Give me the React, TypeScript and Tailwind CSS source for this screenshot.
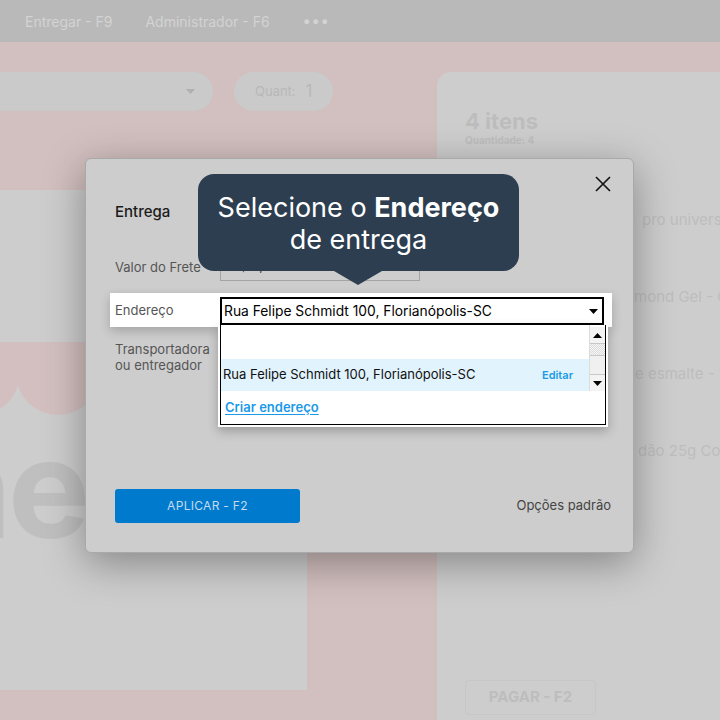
import React from 'react';

const font = { fontFamily: 'Inter, "Noto Sans", sans-serif' };

const Caret: React.FC<{ up?: boolean; className?: string }> = ({ up, className }) => (
  <svg width="9" height="5" viewBox="0 0 9 5" className={className}>
    {up ? <path d="M0 5 L4.5 0 L9 5 Z" fill="currentColor" /> : <path d="M0 0 L9 0 L4.5 5 Z" fill="currentColor" />}
  </svg>
);

// the start of each name sits behind the modal
const items = [
  { hidden: 'Esmalte Top Coat Brilho', shown: 'pro universal', cut: 'w-[177px]' },
  { hidden: 'Esmalte Gel Diamo', shown: 'mond Gel - Gold', cut: 'w-[169px]' },
  { hidden: 'Kit Removedor d', shown: 'e esmalte - 100ml', cut: 'w-[170px]' },
  { hidden: 'Lixa de unha Alg', shown: 'dão 25g Cotton', cut: 'w-[173px]' },
];

const Background: React.FC = () => (
  <div className="flex flex-col w-full h-full">
    <nav className="h-[42px] shrink-0 bg-[#b9b9b9] flex items-center pl-[25px] text-[14px] text-[#d3d3d3]">
      <span>Entregar - F9</span>
      <span className="ml-[33px]">Administrador - F6</span>
      <span className="ml-[33px] text-[15px] tracking-[0.5px]">•••</span>
    </nav>

    <div className="flex-1 flex bg-[#d2bfbf] overflow-hidden">
      <div className="w-[437px] shrink-0 flex flex-col">
        <div className="flex pt-[30px] gap-[21px]">
          <div className="w-[213px] h-[39px] rounded-r-full bg-[#cacaca] flex items-center justify-end pr-[18px] text-[#b0b0b0]">
            <Caret />
          </div>
          <div className="w-[99px] h-[39px] rounded-full bg-[#cacaca] flex items-center pl-[21px] text-[#b8b8b8]">
            <span className="text-[13px]">Quant:</span>
            <span className="ml-[10px] text-[17px]">1</span>
          </div>
        </div>
        <div className="mt-[79px] w-[307px] h-[500px] bg-[#cdcdcd] overflow-hidden flex flex-col">
          <svg width="307" height="76" viewBox="0 0 307 76" className="mt-[152px] shrink-0">
            <path d="M0 0 H307 V35 H0 Z" fill="#d3bfbf" />
            <circle cx="58" cy="31" r="42" fill="#d3bfbf" />
            <circle cx="-22" cy="31" r="42" fill="#d3bfbf" />
          </svg>
          <div className="mt-[1px] ml-[-74px] text-[138px] leading-[138px] font-bold text-[#bfbfbf] tracking-[-4px]">ne</div>
        </div>
      </div>

      <div className="flex-1 mt-[30px] bg-[#cdcdcd] rounded-tl-[14px] pl-[28px] pt-[36px] flex flex-col text-[#bdbdbd]">
        <div className="text-[22px] leading-[26px] font-bold">4 itens</div>
        <div className="text-[10px] leading-[12px] font-bold">Quantidade: 4</div>
        <div className="flex flex-col mt-[65px] gap-[59px] text-[15px] leading-[18px]">
          {items.map((it) => (
            <div key={it.shown} className="flex whitespace-nowrap">
              <span className={`${it.cut} shrink-0 overflow-hidden`}>{it.hidden}</span>
              <span>{it.shown}</span>
            </div>
          ))}
        </div>
        <div className="mt-auto mb-[5px] w-[131px] h-[35px] rounded-[4px] border border-[#c6c6c6] flex items-center justify-center text-[15px] font-bold text-[#bdbdbd]">
          PAGAR - F2
        </div>
      </div>
    </div>
  </div>
);

const AddressDropdown: React.FC = () => (
  <div className="absolute left-[-2px] top-[28px] w-[390px] h-[102px] bg-white px-[2px] pb-[2px] shadow-[0_4px_10px_rgba(0,0,0,0.25)] z-10">
    <div className="h-full border-x border-b border-black flex flex-col">
      <div className="flex h-[66px]">
        <div className="flex-1 flex flex-col">
          <div className="h-[34px]" />
          <div className="h-[32px] bg-[#e1f3fd] flex items-center pl-[2px] pr-[16px] justify-between">
            <span className="text-[13px] text-[#111]">Rua Felipe Schmidt 100, Florianópolis-SC</span>
            <span className="text-[11px] font-semibold text-[#1a9be6]">Editar</span>
          </div>
        </div>
        <div className="w-[16px] flex flex-col pt-[2px] border-l border-[#dcdcdc]">
          <div className="h-[17px] bg-[#f3f3f3] border-b border-[#c8c8c8] flex items-center justify-center text-black">
            <Caret up />
          </div>
          <div className="h-[11px] bg-[repeating-conic-gradient(#dadada_0_25%,#f7f7f7_0_50%)] bg-[length:2px_2px]" />
          <div className="h-[20px] bg-[#f0f0f0] border-y border-[#c8c8c8]" />
          <div className="h-[16px] bg-[#f3f3f3] flex items-center justify-center text-black">
            <Caret />
          </div>
        </div>
      </div>
      <div className="flex-1 flex items-center pl-[4px]">
        <span className="text-[13px] font-semibold text-[#1a9ae8] underline underline-offset-2">Criar endereço</span>
      </div>
    </div>
  </div>
);

const Tooltip: React.FC = () => (
  <div className="absolute left-[112px] top-[15px] w-[321px] h-[97px] rounded-[16px] bg-[#2c3e50] flex flex-col items-center justify-center pt-[3px] text-white text-[27px] leading-[32px] z-20">
    <div>
      Selecione o <span className="font-bold">Endereço</span>
    </div>
    <div>de entrega</div>
    <svg width="48" height="14" viewBox="0 0 48 14" className="absolute top-full left-[136px]">
      <path d="M0 0 H48 L24 14 Z" fill="#2c3e50" />
    </svg>
  </div>
);

const DeliveryModal: React.FC = () => (
  <div className="absolute left-[85px] top-[158px] w-[549px] h-[395px] rounded-[6px] bg-[#cdcdcd] border border-[#a9a9a9] shadow-[0_10px_40px_rgba(0,0,0,0.35)] flex flex-col px-[29px] pt-[43px] pb-[29px]">
    <button className="absolute right-[22px] top-[17px] w-[16px] h-[16px]">
      <svg width="16" height="16" viewBox="0 0 16 16">
        <path d="M1 1 L15 15 M15 1 L1 15" stroke="#111" strokeWidth="1.6" />
      </svg>
    </button>

    <div className="h-[20px] text-[15px] leading-[20px] font-medium text-[#1b1b1b]">Entrega</div>

    <div className="mt-[36px] flex items-start">
      <span className="w-[105px] pt-[1px] text-[13px] leading-[16px] text-[#555]">Valor do Frete</span>
      <div className="w-[200px] h-[23px] border border-[#a4a4a4] pl-[10px] text-[13px] leading-[14px] text-[#333]">R$ 0,00</div>
    </div>

    <div className="mt-[12px] -ml-[5px] -mr-[8px] pl-[5px] pr-[8px] h-[34px] pt-[4px] bg-white flex items-start shadow-[0_4px_10px_rgba(0,0,0,0.2)] relative z-10">
      <span className="w-[105px] h-[28px] flex items-center text-[13px] text-[#555]">Endereço</span>
      <div className="relative flex-1">
        <div className="h-[28px] border-2 border-black bg-white flex items-center justify-between pl-[2px] pr-[4px]">
          <span className="text-[13.8px] text-black">Rua Felipe Schmidt 100, Florianópolis-SC</span>
          <Caret className="text-black" />
        </div>
        <AddressDropdown />
      </div>
    </div>

    <div className="mt-[14px] text-[13px] leading-[16px] text-[#555]">
      Transportadora
      <br />
      ou entregador
    </div>

    <div className="mt-auto -mr-[7px] flex items-center justify-between">
      <button className="w-[185px] h-[34px] rounded-[3px] bg-[#007acc] text-[12px] tracking-[0.3px] text-[#c6dbee]">APLICAR - F2</button>
      <span className="text-[13px] text-[#444]">Opções padrão</span>
    </div>

    <Tooltip />
  </div>
);

const App: React.FC = () => {
  return (
    <div className="relative w-[720px] h-[720px] overflow-hidden" style={font}>
      <Background />
      <DeliveryModal />
    </div>
  );
};

export default App;
